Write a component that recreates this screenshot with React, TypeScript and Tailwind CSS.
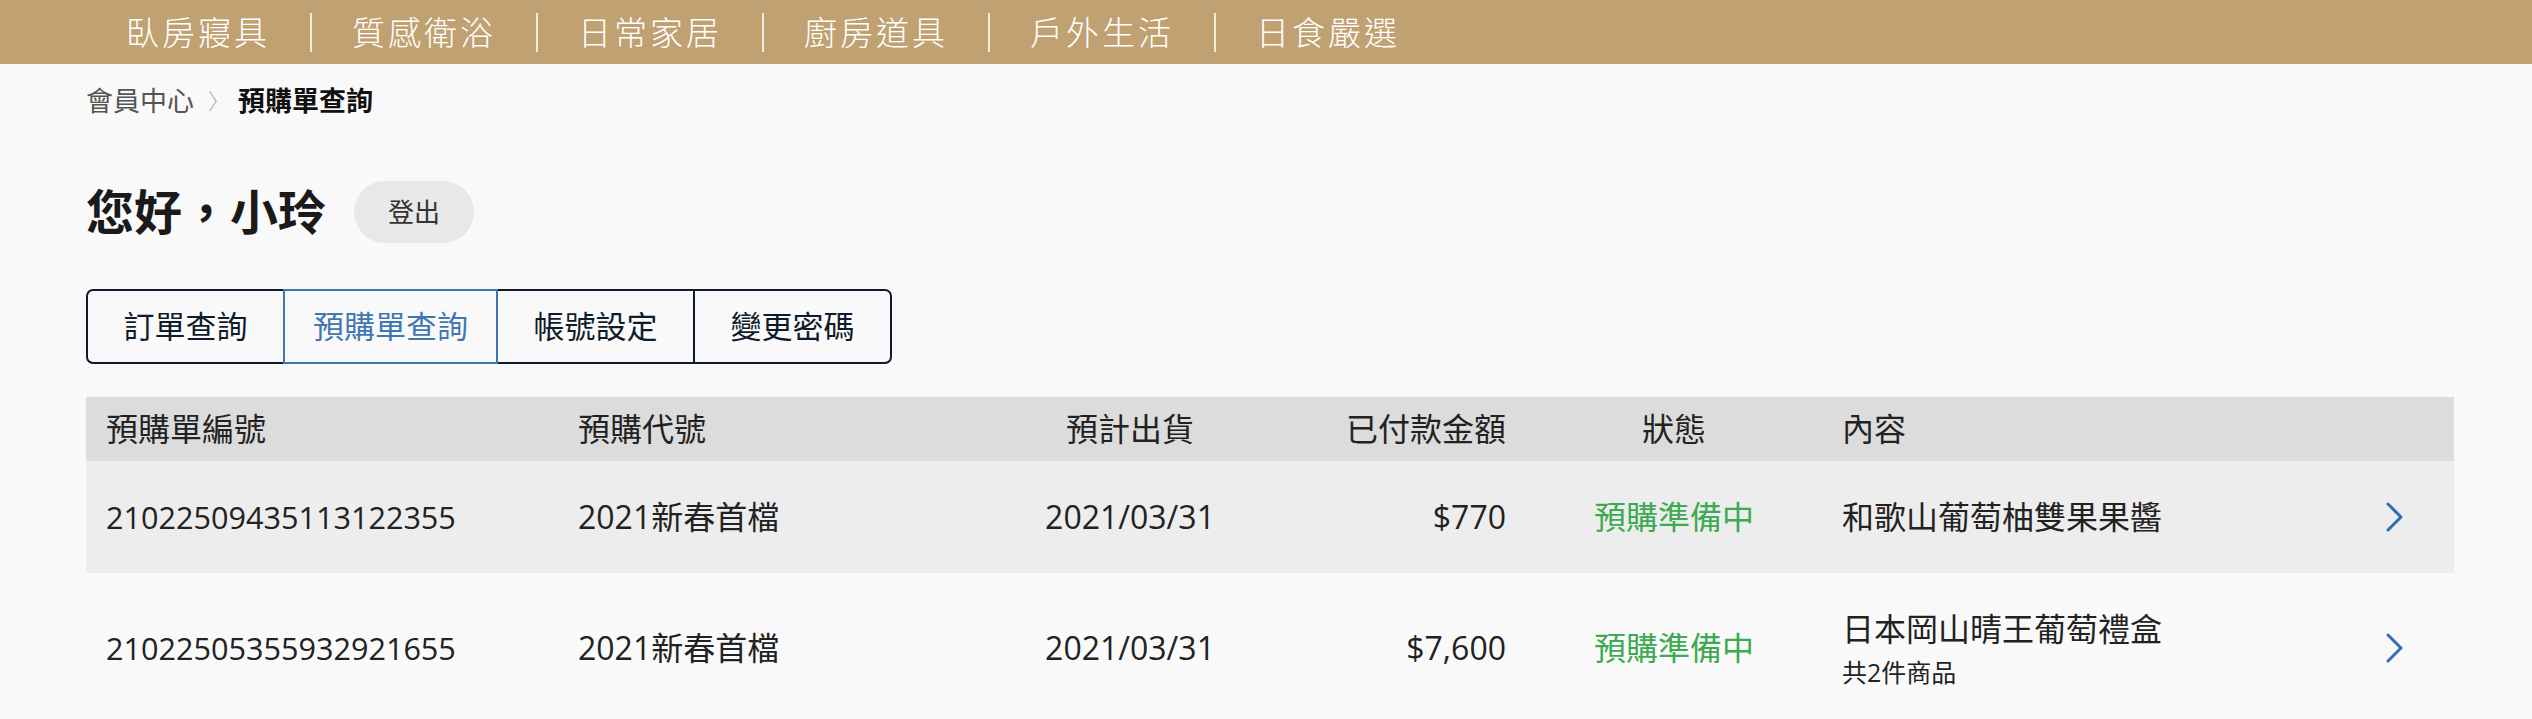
const navItems = ["臥房寢具", "質感衛浴", "日常家居", "廚房道具", "戶外生活", "日食嚴選"];
const tabs = ["訂單查詢", "預購單查詢", "帳號設定", "變更密碼"];

const orders = [
  { id: "21022509435113122355", code: "2021新春首檔", ship: "2021/03/31", paid: "$770", status: "預購準備中", item: "和歌山葡萄柚雙果果醬", extra: "" },
  { id: "21022505355932921655", code: "2021新春首檔", ship: "2021/03/31", paid: "$7,600", status: "預購準備中", item: "日本岡山晴王葡萄禮盒", extra: "共2件商品" },
];

// column layout shared by the header and the rows
const cols = "grid grid-cols-[472px_432px_240px_256px_336px_544px_48px] items-center px-[20px]";

function Chevron() {
  return (
    <svg width="18" height="30" viewBox="0 0 18 30" fill="none" className="text-[#2f6db5]">
      <polyline points="2,2 15,15 2,28" stroke="currentColor" strokeWidth="3" strokeLinecap="round" strokeLinejoin="round" />
    </svg>
  );
}

export default function App() {
  return (
    <div className="min-h-screen bg-[#f9f9f9] text-[#222] font-['Open_Sans','Noto_Sans_CJK_TC',sans-serif]">
      {/* Top category bar */}
      <nav className="h-[64px] bg-[#c0a172] pl-[86px] flex items-center">
        {navItems.map((item, i) => (
          <div key={item} className="flex items-center">
            {i > 0 && <span className="w-[2px] h-[39px] bg-[#f3ece0]" />}
            <span className="px-[40px] text-[33px] leading-none tracking-[3px] text-white font-light">{item}</span>
          </div>
        ))}
      </nav>

      <div className="pl-[86px] w-[2454px]">
        {/* Breadcrumb */}
        <div className="h-[72px] flex items-center text-[27px] leading-none">
          <span className="text-[#555]">會員中心</span>
          <span className="ml-[14px] mr-[8px] text-[#aaa] text-[22px] font-light">〉</span>
          <span className="font-bold text-[#111]">預購單查詢</span>
        </div>

        {/* Greeting */}
        <div className="mt-[45px] flex items-center gap-[28px]">
          <h1 className="text-[48px] font-bold leading-none text-[#1a1a1a]">您好，小玲</h1>
          <button className="h-[62px] w-[120px] rounded-full bg-[#e8e8e8] text-[26px] text-[#333]">登出</button>
        </div>

        {/* Account tabs */}
        <div className="mt-[46px] flex">
          {tabs.map((t, i) => {
            const active = i === 1;
            return (
              <button
                key={t}
                className={`relative h-[75px] min-w-[199px] px-[28px] border-2 text-[31px] leading-none ${
                  i > 0 ? "-ml-[2px]" : ""
                } ${i === 0 ? "rounded-l-[7px]" : ""} ${i === tabs.length - 1 ? "rounded-r-[7px]" : ""} ${
                  active ? "z-10 border-[#3f78b0] text-[#3f78b0]" : "border-[#0f1b2a] text-[#0f1b2a]"
                }`}
              >
                {t}
              </button>
            );
          })}
        </div>

        {/* Pre-order table */}
        <div className="mt-[33px] text-[32px]">
          <div className={`${cols} h-[64px] bg-[#dcdcdc] text-[#222]`}>
            <div>預購單編號</div>
            <div>預購代號</div>
            <div className="text-center">預計出貨</div>
            <div className="text-right">已付款金額</div>
            <div className="text-center">狀態</div>
            <div>內容</div>
            <div />
          </div>
          {orders.map((o, i) => (
            <div key={o.id} className={`${cols} py-[32px] leading-[48px] ${i % 2 === 0 ? "bg-[#ededed]" : "bg-[#f9f9f9]"}`}>
              <div className="text-[30.6px]">{o.id}</div>
              <div>{o.code}</div>
              <div className="text-center">{o.ship}</div>
              <div className="text-right">{o.paid}</div>
              <div className="text-center text-[#3daa52]">{o.status}</div>
              <div>
                <div>{o.item}</div>
                {o.extra && <div className="text-[25px] leading-[38px]">{o.extra}</div>}
              </div>
              <div className="flex items-center">
                <Chevron />
              </div>
            </div>
          ))}
        </div>
      </div>
    </div>
  );
}
